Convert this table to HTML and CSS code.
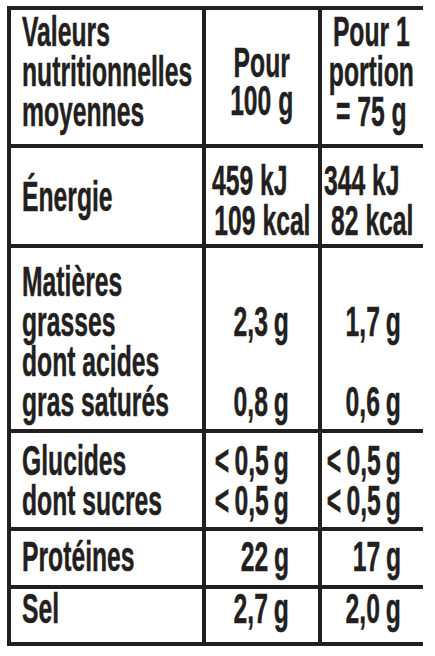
FILE: index.html
```html
<!DOCTYPE html>
<html lang="fr">
<head>
<meta charset="utf-8">
<title>Valeurs nutritionnelles</title>
<link rel="stylesheet" href="styles.css">
</head>
<body>
<div class="table">
  <div class="cell head-label"><div class="t left">Valeurs<br>nutritionnelles<br>moyennes</div></div>
  <div class="cell c head-100"><div class="t center">Pour<br>100 g</div></div>
  <div class="cell c head-portion"><div class="t center">Pour 1<br>portion<br>= 75 g</div></div>

  <div class="cell energy-label"><div class="t left">Énergie</div></div>
  <div class="cell energy-val"><div class="t left"><div>459 kJ</div><div class="indent-a">109 kcal</div></div></div>
  <div class="cell energy-val energy-val3"><div class="t left"><div>344 kJ</div><div class="indent-b">82 kcal</div></div></div>

  <div class="cell fat-label"><div class="t left">Matières<br>grasses<br>dont acides<br>gras saturés</div></div>
  <div class="cell r fat-val val2"><div class="t right num"><div class="blank"></div><div>2,3 g</div><div class="blank"></div><div>0,8 g</div></div></div>
  <div class="cell r fat-val val3"><div class="t right num"><div class="blank"></div><div>1,7 g</div><div class="blank"></div><div>0,6 g</div></div></div>

  <div class="cell carb-label"><div class="t left">Glucides<br>dont sucres</div></div>
  <div class="cell r carb-val val2"><div class="t right num lt">&lt; 0,5 g<br>&lt; 0,5 g</div></div>
  <div class="cell r carb-val val3"><div class="t right num lt">&lt; 0,5 g<br>&lt; 0,5 g</div></div>

  <div class="cell prot-label"><div class="t left">Protéines</div></div>
  <div class="cell r prot-val val2"><div class="t right num">22 g</div></div>
  <div class="cell r prot-val val3"><div class="t right num">17 g</div></div>

  <div class="cell salt-label"><div class="t left">Sel</div></div>
  <div class="cell r salt-val val2"><div class="t right num">2,7 g</div></div>
  <div class="cell r salt-val val3"><div class="t right num">2,0 g</div></div>
</div>
</body>
</html>
```
FILE: styles.css
```css
html, body {
  margin: 0;
  padding: 0;
  background: #ffffff;
}
body {
  padding: 6px 0 0 7px;
  font-family: "Liberation Sans", Arial, sans-serif;
  font-weight: 700;
  font-size: 42px;
  line-height: 40px;
  color: #231f20;
}
.table {
  display: grid;
  grid-template-columns: 191px 112px 105px;
  grid-template-rows: 134px 96px 181px 94px 54px 53px;
  gap: 4px;
  padding: 4px;
  width: 408px;
  background: #231f20;
}
.cell {
  background: #ffffff;
  white-space: nowrap;
  min-width: 0;
  display: flex;
  align-items: flex-start;
  justify-content: flex-start;
}
.cell.c { justify-content: center; }
.cell.r { justify-content: flex-end; }
.t {
  flex: none;
  transform: scaleX(0.588);
  -webkit-text-stroke: 0.5px #231f20;
}
.t.left { transform-origin: left center; text-align: left; }
.t.right { transform-origin: right center; text-align: right; }
.t.center { transform-origin: center center; text-align: center; }
.num { word-spacing: -2px; }
.num.lt { word-spacing: -3px; }
.blank { height: 40px; }

.head-label { padding: 2px 0 0 11px; }
.head-100 { padding: 34px 0 0 0; line-height: 38px; }
.head-portion { padding: 2px 6px 0 0; }

.energy-label { padding: 29px 0 0 11px; }
.energy-val { padding: 13px 0 0 6px; }
.energy-val3 { padding-left: 2px; }
.indent-a { padding-left: 4px; }
.indent-b { padding-left: 12px; }

.fat-label { padding: 14px 0 0 11px; }
.fat-val { padding-top: 14px; }

.carb-label { padding: 8px 0 0 11px; }
.carb-val { padding-top: 8px; }

.prot-label { padding: 6px 0 0 11px; }
.prot-val { padding-top: 6px; }

.salt-label { padding: 0 0 0 11px; }
.salt-val { padding-top: 0; }

.val2 { padding-right: 29px; }
.val3 { padding-right: 26px; }
```
